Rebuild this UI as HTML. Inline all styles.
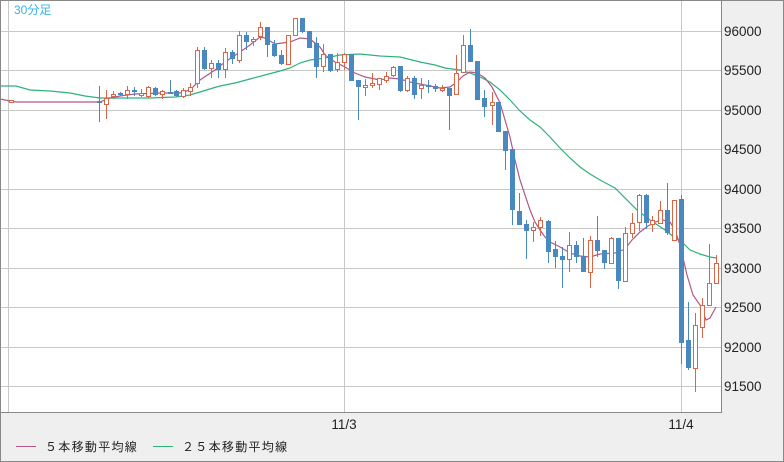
<!DOCTYPE html>
<html><head><meta charset="utf-8"><style>
html,body{margin:0;padding:0;}
body{width:784px;height:462px;overflow:hidden;background:#efefef;font-family:"Liberation Sans","Noto Sans CJK JP",sans-serif;}
</style></head><body>
<svg width="784" height="462" xmlns="http://www.w3.org/2000/svg" style="display:block">
<rect x="0" y="0" width="784" height="462" fill="#efefef"/>
<rect x="0" y="0" width="721" height="412" fill="#fff"/>
<g stroke="#c8c8c8" stroke-width="1" shape-rendering="crispEdges">
<line x1="0" y1="31.5" x2="721" y2="31.5"/>
<line x1="0" y1="70.5" x2="721" y2="70.5"/>
<line x1="0" y1="110.5" x2="721" y2="110.5"/>
<line x1="0" y1="149.5" x2="721" y2="149.5"/>
<line x1="0" y1="189.5" x2="721" y2="189.5"/>
<line x1="0" y1="228.5" x2="721" y2="228.5"/>
<line x1="0" y1="268.5" x2="721" y2="268.5"/>
<line x1="0" y1="307.5" x2="721" y2="307.5"/>
<line x1="0" y1="347.5" x2="721" y2="347.5"/>
<line x1="0" y1="386.5" x2="721" y2="386.5"/>
<line x1="8.5" y1="0" x2="8.5" y2="412"/>
<line x1="344.5" y1="0" x2="344.5" y2="412"/>
<line x1="681.5" y1="0" x2="681.5" y2="412"/>
</g>
<polyline fill="none" stroke="#2fb27a" stroke-width="1.2" points="0,86 16,86 30,90 50,91 70,93 85,96 100,98 150,98 175,97 190,95 200,92 213,88 220,86 235,83 250,79 265,75 280,71 290,68 300,63 310,60 325,58 340,55 360,54 380,56 400,57 420,62 435,65 445,68 460,70 470,73 480,77 490,82 500,90 510,100 520,111 530,120 540,127 550,137 560,148 570,158 580,167 590,174 600,180 615,188 637,210 650,220 665,230 675,238 681,241 690,250 700,254 710,257 716,258"/>
<polyline fill="none" stroke="#b0578a" stroke-width="1.2" points="0,99 10,101 16,102 100,102 110,98 120,96 135,94 160,93 180,93 190,90 200,80 215,70 225,62 240,52 250,45 260,37 265,38 275,44 290,42 300,38 310,39 320,47 325,55 335,62 345,67 355,73 365,77 380,80 390,78 400,79 410,82 420,84 430,86 440,88 450,87 457,82 463,76 470,72 477,73 485,78 492,87 500,103 505,120 510,137 515,160 520,180 525,195 530,210 535,222 540,230 545,237 550,242 560,247 570,253 580,256 590,257 600,254 615,253 625,249 632,240 640,232 648,226 655,222 663,220 670,222 675,230 680,245 687,275 693,295 700,305 706,320 710,318 716,307"/>
<g id="c" shape-rendering="crispEdges"></g>
<rect x="721" y="0" width="1" height="413" fill="#888"/>
<rect x="0" y="412" width="722" height="1" fill="#888"/>
<rect x="0.5" y="0.5" width="783" height="461" fill="none" stroke="#888"/>
<text x="14" y="14" font-size="12" fill="#39b5e6">30分足</text>
<g font-size="13.5" fill="#222">
<text x="724" y="36">96000</text>
<text x="724" y="75">95500</text>
<text x="724" y="115">95000</text>
<text x="724" y="154">94500</text>
<text x="724" y="194">94000</text>
<text x="724" y="233">93500</text>
<text x="724" y="273">93000</text>
<text x="724" y="312">92500</text>
<text x="724" y="352">92000</text>
<text x="724" y="391">91500</text>
<text x="344" y="429" text-anchor="middle">11/3</text>
<text x="681" y="429" text-anchor="middle">11/4</text>
</g>
<line x1="16" y1="446.5" x2="36" y2="446.5" stroke="#b0578a"/>
<text x="45" y="451" font-size="12" letter-spacing="1.3" fill="#222">５本移動平均線</text>
<line x1="153" y1="446.5" x2="173" y2="446.5" stroke="#2fb27a"/>
<text x="182" y="451" font-size="12" letter-spacing="1.3" fill="#222">２５本移動平均線</text>
</svg>
<script>
var d=[
[11,'r',100,102,100,102],
[99,'b',101,103,86,122],[106,'r',98,104,90,119],[113,'r',94,96,91,99],[120,'b',93,95,92,96],[127,'r',90,94,86,99],[134,'b',90,92,87,96],[141,'r',93,95,89,97],[148,'r',87,96,86,98],[155,'b',88,95,87,96],[162,'r',91,94,90,99],[170,'b',92,94,80,94],[176,'b',91,96,90,97],[183,'r',90,96,88,98],[190,'r',87,91,83,96],
[197,'r',50,83,47,88],[204,'b',50,69,47,70],[211,'r',63,68,60,78],[218,'b',63,70,60,78],[225,'r',52,69,48,78],[232,'b',52,59,50,64],[239,'r',35,60,31,63],[246,'b',35,42,32,50],[253,'r',39,41,37,46],[260,'r',27,36,22,40],[267,'b',27,45,27,57],[274,'b',44,56,40,57],[281,'b',55,64,50,65],[288,'r',35,64,35,64],[295,'r',18,35,18,35],[302,'b',18,32,18,33],[309,'b',31,48,31,48],[316,'b',43,67,37,78],[323,'r',54,66,44,72],[330,'b',54,71,54,72],
[337,'r',62,69,53,72],[344,'r',54,62,53,70],[351,'b',54,81,54,81],[358,'b',80,87,80,120],[365,'r',85,87,79,96],[372,'r',83,85,73,88],[379,'r',78,84,78,90],[386,'r',76,80,72,83],[393,'r',67,75,66,77],[400,'b',66,91,66,92],[407,'r',78,90,76,92],[414,'b',78,95,76,99],[421,'r',85,88,78,99],[428,'b',85,87,80,93],[435,'b',86,89,84,92],[442,'r',88,90,85,92],[449,'b',88,96,88,130],[456,'r',73,94,55,94],[463,'r',45,72,35,73],[470,'b',45,62,29,62],[477,'b',61,100,61,100],
[484,'b',98,107,90,117],[492,'r',102,105,92,125],[498,'b',102,132,102,132],[505,'b',131,151,131,170],[512,'b',149,210,149,225],[519,'b',211,225,193,225],[526,'b',224,231,220,259],[533,'r',227,230,222,242],[540,'r',220,227,217,236],[548,'b',221,252,220,263],[555,'b',249,257,241,268],[562,'b',256,260,247,288],[569,'r',245,259,232,272],[576,'b',245,257,241,263],[583,'b',256,272,238,272],[590,'r',240,272,236,288],[597,'b',240,251,216,257],[604,'b',250,263,250,269],[611,'r',238,263,237,263],[618,'b',238,281,238,289],[625,'r',233,281,227,281],[632,'r',223,233,213,238],[639,'r',195,222,194,231],[646,'b',195,223,194,229],[652,'r',220,224,216,232],[660,'r',210,223,201,223],[667,'b',210,233,183,235],[674,'r',200,240,200,241],[681,'b',199,343,195,364],[688,'b',340,368,302,370],[695,'r',325,368,313,392],[702,'r',305,327,298,338],[709,'r',283,305,244,305],[716,'r',263,283,255,283]
];
var s='';
d.forEach(function(c){var x=c[0],col=c[1]=='r'?'#d8674a':'#4a88c0';
s+='<line x1="'+(x+0.5)+'" y1="'+c[4]+'" x2="'+(x+0.5)+'" y2="'+c[5]+'" stroke="'+col+'"/>';
if(c[1]=='r'){s+='<rect x="'+(x-1.5)+'" y="'+(c[2]+0.5)+'" width="4" height="'+Math.max(c[3]-c[2],1)+'" fill="#fff" stroke="'+col+'"/>';}
else{s+='<rect x="'+(x-2)+'" y="'+c[2]+'" width="5" height="'+Math.max(c[3]-c[2],1)+'" fill="'+col+'"/>';}
});
document.getElementById('c').innerHTML=s;
</script>
</body></html>
